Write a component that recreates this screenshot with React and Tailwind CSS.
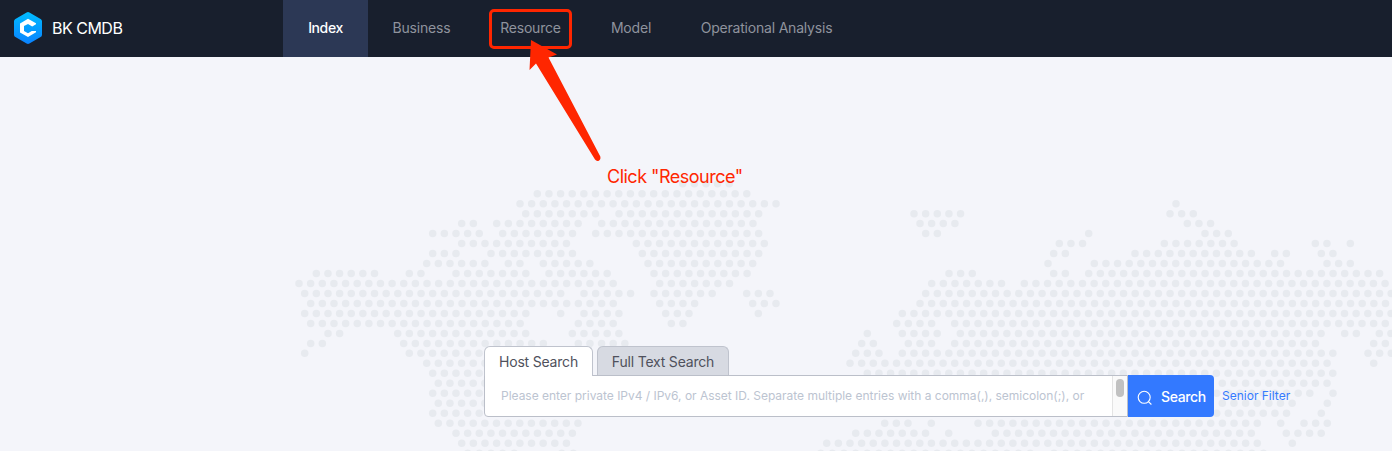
import React from "react";

const PITCH = 11.637;

// Each row lists runs of dots as [x of first dot, number of dots].
const ROWS = [
  [[682.7, 5]],
  [[537.3, 19]],
  [[520, 23], [1176, 1]],
  [[525.7, 7], [619, 13], [914, 5], [1170, 3]],
  [[461.7, 2], [496.7, 8], [601.7, 14], [920, 4], [1187.3, 3]],
  [[432.7, 5], [502.7, 7], [595.7, 15], [925.7, 2], [1088.7, 1], [1205, 3]],
  [[461.7, 10], [636.3, 12], [1059.3, 3], [1164.3, 7], [1315.3, 2], [1350.3, 1]],
  [[432.7, 3], [491, 8], [642.3, 11], [1053.7, 2], [1135, 11], [1274.7, 2], [1321.3, 2]],
  [[426.7, 6], [508.3, 2], [543.3, 5], [648, 10], [1048, 1], [1094.3, 17], [1327, 3]],
  [[316.3, 6], [409.3, 2], [456, 7], [549, 6], [654, 9], [949, 3], [1053.7, 2], [1088.7, 26]],
  [[299, 28], [659.7, 7], [931.7, 7], [1024.3, 32]],
  [[304.7, 23], [584, 5], [654, 6], [746.7, 3], [925.7, 41]],
  [[310.7, 27], [659.7, 4], [752.7, 3], [920, 41]],
  [[304.7, 20], [560.7, 1], [584, 4], [665.7, 3], [758.3, 1], [902.3, 43]],
  [[310.7, 19], [578.3, 4], [671.3, 2], [896.7, 4], [954.7, 38]],
  [[328, 2], [397.7, 12], [572.3, 5], [867.3, 1], [902.3, 4], [960.3, 32], [1344.7, 2], [1379.3, 2]],
  [[310.7, 2], [403.7, 13], [578.3, 5], [861.7, 2], [908.3, 3], [954.7, 32], [1373.7, 2]],
  [[304.7, 1], [409.3, 16], [855.7, 3], [902.3, 38], [1368, 3]],
  [[426.7, 9], [850, 42], [1373.7, 1]],
  [[432.7, 9], [867.3, 41]],
  [[438.3, 9], [1222.3, 10]],
  [[432.7, 9], [1216.7, 9], [1333, 1]],
  [[438.3, 9], [1222.3, 7], [1327.3, 1]],
  [[432.7, 9], [1216.7, 7], [1321.3, 1]],
  [[438.3, 13], [884.7, 3], [931.3, 1], [978, 25], [1280.7, 1], [1304, 3]],
  [[456, 11], [855.7, 7], [948.7, 1], [995.3, 23], [1286.3, 4]],
  [[461.7, 10], [826.7, 38], [1292.3, 1]],
  [[467.7, 5], [561.7, 2], [820.7, 19], [1054, 19]],
];

function DotMap() {
  return (
    <svg className="absolute inset-0" width="1392" height="451" aria-hidden="true">
      <g fill="#e7eaef">
        {ROWS.map((runs, row) =>
          runs.map(([x, count]) =>
            Array.from({ length: count }, (_, i) => (
              <circle key={`${row}-${x}-${i}`} cx={x + i * PITCH} cy={183.7 + row * 9.98} r="3.75" />
            ))
          )
        )}
      </g>
    </svg>
  );
}

function Logo() {
  return (
    <svg width="28" height="32" viewBox="0 0 28 32" aria-hidden="true">
      <defs>
        <linearGradient id="logo" x1="0" y1="0" x2="0" y2="1">
          <stop offset="0" stopColor="#00bcff" />
          <stop offset="1" stopColor="#0a82ff" />
        </linearGradient>
      </defs>
      <path d="M12.6.5a2.8 2.8 0 0 1 2.8 0l11.2 6.4A2.8 2.8 0 0 1 28 9.3v13.4a2.8 2.8 0 0 1-1.4 2.4l-11.2 6.4a2.8 2.8 0 0 1-2.8 0L1.4 25.1A2.8 2.8 0 0 1 0 22.7V9.3a2.8 2.8 0 0 1 1.4-2.4z" fill="url(#logo)" />
      <path d="M14 6.800L22 11.300V12.200L18.200 14.400 14 11.900 10 14.100V18.900L14 21.200 17 19.500 17.700 18.900H22V20.300L14 24.900 6 20.400V11.400z" fill="#fff" />
    </svg>
  );
}

export default function App() {
  return (
    <div className="relative flex h-[451px] w-[1392px] flex-col overflow-hidden bg-[#f4f5fa] font-['Inter',sans-serif]">
      <DotMap />
      <header className="relative flex h-[57px] shrink-0 bg-[#181f2d]">
        <div className="flex w-[283px] items-center gap-[10px] pl-3.5 pb-px">
          <Logo />
          <span className="text-[16px] tracking-[-0.5px] text-white">BK CMDB</span>
        </div>
        <nav className="flex text-[14px] leading-[56px] tracking-[-0.2px] text-[#8f939d]">
          <a className="w-[85px] bg-[#2c3855] text-center font-medium tracking-[-0.4px] text-white">Index</a>
          <a className="w-[107px] text-center">Business</a>
          <a className="w-[111px] text-center">Resource</a>
          <a className="w-[90px] text-center">Model</a>
          <a className="w-[181px] text-center">Operational Analysis</a>
        </nav>
      </header>

      <main className="relative flex flex-col pl-[484px] pt-[289px]">
        <div className="flex h-[29px] gap-1 text-[14px] leading-[30px] tracking-[-0.2px] text-[#4f515c]">
          <div className="relative z-10 h-[30px] w-[109px] rounded-t-md border border-b-0 border-[#bfc3cd] bg-white text-center">Host Search</div>
          <div className="h-[29px] w-[132px] rounded-t-md border border-b-0 border-[#bfc3cd] bg-[#d7dae2] text-center">Full Text Search</div>
        </div>
        <div className="flex h-[42px]">
          <div className="flex w-[644px] rounded-bl-sm border border-[#bbbfc9] bg-white">
            <div className="flex-1 overflow-hidden whitespace-nowrap pl-4 text-[12px] leading-[40px] tracking-[-0.015px] text-[#bcc4d1]">
              Please enter private IPv4 / IPv6, or Asset ID. Separate multiple entries with a comma(,), semicolon(;), or
            </div>
            <div className="flex w-[15px] justify-center border-l border-[#e4e4e4] bg-[#fafafa] pt-[3px]">
              <div className="h-[18px] w-2 rounded-full bg-[#c1c1c1]" />
            </div>
          </div>
          <button className="flex w-[86px] items-center rounded-r-sm bg-[#3379ff] pl-[9px] pt-px text-[14px] font-medium tracking-[-0.35px] text-white">
            <svg className="mt-0.5" width="16" height="16" viewBox="0 0 16 16" fill="none" stroke="#fff" strokeWidth="1.1" aria-hidden="true">
              <circle cx="7.2" cy="7.3" r="6" />
              <path d="M11.4 11.6l3 2.9" />
            </svg>
            <span className="ml-2">Search</span>
          </button>
          <a className="ml-2 whitespace-nowrap text-[12px] leading-[41px] text-[#357bff]">Senior Filter</a>
        </div>
      </main>

      <div className="absolute left-[489px] top-[9px] h-10 w-[83px] rounded-[5px] border-[3px] border-[#ff2600]" />
      <svg className="absolute left-[520px] top-[35px]" width="90" height="135" viewBox="520 35 90 135" aria-hidden="true">
        <path d="M531 40L557 54.5 548.5 57.5 600.3 156.5Q601 159.5 598.8 160.7 596.5 161.6 595 159.5L536 63.5 529.5 70z" fill="#ff2600" />
      </svg>
      <div className="absolute left-[607px] top-[165px] whitespace-nowrap text-[18px] leading-6 tracking-[-0.5px] text-[#ff2600]">Click "Resource"</div>
    </div>
  );
}
